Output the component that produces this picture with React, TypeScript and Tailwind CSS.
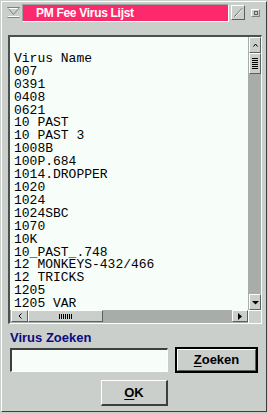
const names = [
  "",
  "Virus Name",
  "007",
  "0391",
  "0408",
  "0621",
  "10 PAST",
  "10 PAST 3",
  "1008B",
  "100P.684",
  "1014.DROPPER",
  "1020",
  "1024",
  "1024SBC",
  "1070",
  "10K",
  "10_PAST_.748",
  "12 MONKEYS-432/466",
  "12 TRICKS",
  "1205",
  "1205 VAR",
];

const raised =
  "border-t border-l border-r border-b border-t-white border-l-white border-r-[#5d615d] border-b-[#5d615d]";

function ScrollButton({ className = "", children }: { className?: string; children?: React.ReactNode }) {
  return (
    <div className={`flex items-center justify-center bg-[#cbcfcb] ${raised} ${className}`}>{children}</div>
  );
}

export default function App() {
  return (
    <div className="w-[268px] h-[414px] bg-[#cbcfcb] font-['Liberation_Sans',Arial,sans-serif] overflow-hidden">
      <div className="ml-px mt-px w-[266px] h-[411px] flex flex-col border-t border-l border-r border-b border-t-white border-l-white border-r-[#3c3f3c] border-b-[#3c3f3c]">
        {/* title bar */}
        <div className="flex items-start h-[22px] pl-[5px]">
          <svg width="13" height="11" className="mt-[5px]" viewBox="0 0 13 11">
            <path d="M0.5 0.5H12.5L6.5 7.5Z" fill="none" stroke="#7f837f" />
            <path d="M1.5 1.5H11" stroke="#ffffff" />
            <path d="M0.5 10.5H12.5" stroke="#7f837f" />
            <path d="M1 9.5H12" stroke="#ffffff" />
          </svg>
          <div className="ml-[2px] mt-[2px] w-[207px] h-[18px] bg-[#fc2a6c] border border-t-[#9ea29e] border-l-[#9ea29e] border-r-white border-b-white pl-[13px] text-white font-bold text-[12px] leading-[16px] tracking-[-0.3px]">
            PM Fee Virus Lijst
          </div>
          <div className={`ml-[2px] mt-[3px] w-[14px] h-[15px] ${raised}`}>
            <svg width="12" height="13" viewBox="0 0 12 13">
              <path d="M2.5 10.5L10 2.5" stroke="#4d514d" />
              <path d="M3.5 10.5L10 3.5" stroke="#ffffff" />
            </svg>
          </div>
          <div className="ml-[6px] mt-[7px] w-[9px] h-[8px] flex items-center justify-center border border-t-white border-l-white border-r-[#7f837f] border-b-[#7f837f]">
            <div className="w-[4px] h-[4px] border border-[#5d615d]" />
          </div>
        </div>

        {/* list box */}
        <div className="ml-[6px] mt-[11px] w-[254px] h-[289px] grid grid-cols-[238px_13px] grid-rows-[273px_13px] border-t-2 border-l-2 border-r border-b border-t-[#4d514d] border-l-[#4d514d] border-r-white border-b-white">
          <div className="bg-[#f7fdf9] overflow-hidden pl-[4px] pt-[3px]">
            <pre className="font-['Liberation_Mono','Courier_New',monospace] text-[13px] leading-[12.9px] text-black">
              {names.join("\n")}
            </pre>
          </div>
          {/* vertical scrollbar */}
          <div className="bg-[#a9ada9] flex flex-col pl-px">
            <ScrollButton className="w-[12px] h-[16px]">
              <svg width="5" height="4" viewBox="0 0 5 4">
                <path d="M0.5 3.5L2.5 1L4.5 3.5" fill="none" stroke="#000" />
              </svg>
            </ScrollButton>
            <ScrollButton className="w-[12px] h-[21px]">
              <svg width="6" height="13" viewBox="0 0 6 13">
                {[1, 3, 5, 7, 9, 11].map((y) => (
                  <path key={y} d={`M0 ${y + 0.5}H6`} stroke="#000" />
                ))}
              </svg>
            </ScrollButton>
            <div className="flex-1" />
            <ScrollButton className="w-[12px] h-[16px]">
              <svg width="7" height="5" viewBox="0 0 7 5">
                <path d="M0 1H7L3.5 4.5Z" fill="#000" />
              </svg>
            </ScrollButton>
          </div>
          {/* horizontal scrollbar */}
          <div className="bg-[#a9ada9] flex items-stretch pl-px">
            <ScrollButton className="w-[17px] h-[12px]">
              <svg width="4" height="6" viewBox="0 0 4 6">
                <path d="M3.5 0.5L1 3L3.5 5.5" fill="none" stroke="#000" />
              </svg>
            </ScrollButton>
            <ScrollButton className="w-[75px] h-[12px]">
              <svg width="13" height="5" viewBox="0 0 13 5">
                {[0, 2, 4, 6, 8, 10, 12].map((x) => (
                  <path key={x} d={`M${x + 0.5} 0V5`} stroke="#000" />
                ))}
              </svg>
            </ScrollButton>
            <div className="flex-1" />
            <ScrollButton className="w-[16px] h-[12px]">
              <svg width="4" height="7" viewBox="0 0 4 7">
                <path d="M0 0V7L4 3.5Z" fill="#000" />
              </svg>
            </ScrollButton>
          </div>
          <div className="bg-[#cbcfcb] border-t border-l border-white" />
        </div>

        {/* search */}
        <div className="ml-[8px] mt-[6px] text-[13px] leading-[15px] font-bold text-[#0c0c80]">Virus Zoeken</div>
        <div className="ml-[8px] mt-[2px] flex items-center">
          <div className="w-[158px] h-[24px] bg-[#f7fdf9] border-t-2 border-l-2 border-r border-b border-t-[#3c3f3c] border-l-[#3c3f3c] border-r-white border-b-white" />
          <div className="ml-[7px] w-[83px] h-[26px] border-2 border-black">
            <div className={`w-full h-full flex items-center justify-center bg-[#cbcfcb] ${raised} text-[13px] font-bold text-black`}>
              <span>
                <span className="underline underline-offset-2">Z</span>oeken
              </span>
            </div>
          </div>
        </div>
        <div className="mt-[7px] ml-[99px] w-[67px] h-[26px] border-t border-l border-t-white border-l-white border-r-2 border-b-2 border-r-[#3c3f3c] border-b-[#3c3f3c] flex items-center justify-center text-[13px] font-bold text-black">
          <span>
            <span className="underline underline-offset-2">O</span>K
          </span>
        </div>
      </div>
    </div>
  );
}
